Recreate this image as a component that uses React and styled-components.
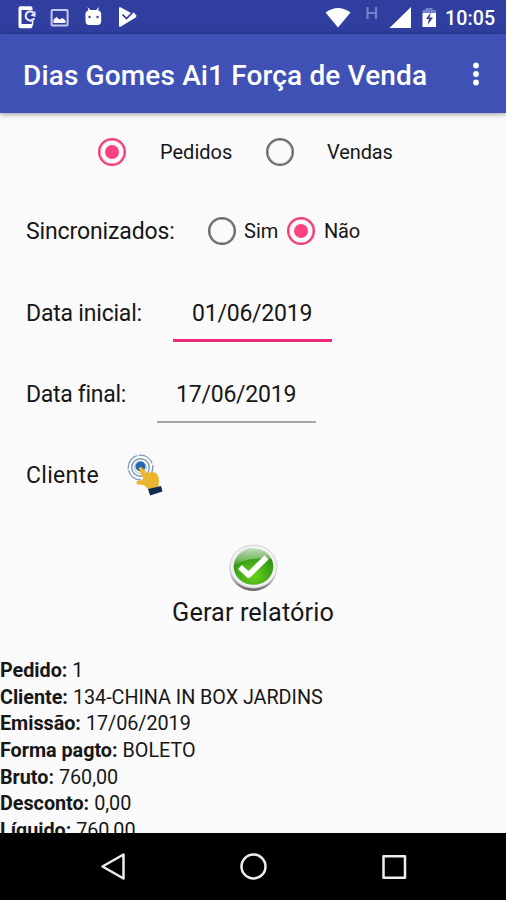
import React from "react";
import styled, { createGlobalStyle } from "styled-components";

const GlobalStyle = createGlobalStyle`
  * { box-sizing: border-box; }
  body { margin: 0; background: #fafafa; font-family: Roboto, sans-serif; overflow: hidden; }
`;

const Screen = styled.div`
  width: 506px;
  height: 900px;
  display: flex;
  flex-direction: column;
  background: #fafafa;
  color: #171717;
`;
const StatusBar = styled.header`
  height: 34px;
  flex: none;
  display: flex;
  background: #303f9f;
  color: #fff;
  svg { display: block; flex: none; }
`;
const Clock = styled.span`
  margin-left: 3px;
  font-size: 19.6px;
  font-weight: 500;
  line-height: 37px;
  letter-spacing: 0.1px;
  white-space: nowrap;
`;
const AppBar = styled.div`
  height: 79px;
  flex: none;
  display: flex;
  align-items: center;
  justify-content: space-between;
  padding: 0 24px 0 23px;
  background: #3f51b5;
  box-shadow: 0 1px 5px rgba(0, 0, 0, 0.4);
  z-index: 1;
`;
const Title = styled.h1`
  margin: 4px 0 0;
  font-size: 28px;
  font-weight: 500;
  letter-spacing: 0.14px;
  white-space: nowrap;
  color: #fff;
`;
const Content = styled.main`
  flex: 1;
  min-height: 0;
  overflow: hidden;
  display: flex;
  flex-direction: column;
`;
const Row = styled.div`
  height: ${(p) => p.$height}px;
  flex: none;
  display: flex;
  align-items: center;
  padding-left: ${(p) => p.$inset || 26}px;
`;
const Label = styled.span`
  width: ${(p) => p.$width}px;
  flex: none;
  padding-top: 2px;
  font-size: 23px;
  letter-spacing: ${(p) => p.$spacing || 0}px;
  line-height: 32px;
  white-space: nowrap;
`;
const Option = styled.label`
  width: ${(p) => p.$width}px;
  flex: none;
  display: flex;
  align-items: center;
  gap: ${(p) => p.$gap}px;
  font-size: 20px;
  letter-spacing: ${(p) => p.$spacing || 0}px;
  line-height: 28px;
  white-space: nowrap;
`;
const RadioRing = styled.span`
  width: 28px;
  height: 28px;
  flex: none;
  display: grid;
  place-items: center;
  border: 2px solid ${(p) => (p.$checked ? "#f33c7c" : "#6d6d6d")};
  box-shadow: inset 0 0 0 0.5px ${(p) => (p.$checked ? "#f33c7c" : "#6d6d6d")};
  border-radius: 50%;
  &::after {
    content: "";
    width: 14px;
    height: 14px;
    border-radius: 50%;
    background: ${(p) => (p.$checked ? "#ff4081" : "transparent")};
  }
`;
const DateField = styled.div`
  width: 159px;
  height: 58px;
  padding: 1px 0 0 19px;
  border-bottom: ${(p) => (p.$focused ? "3px solid #ec2a7b" : "2px solid #a5a5a5")};
  font-size: 23px;
  letter-spacing: -0.22px;
  line-height: 58px;
  white-space: nowrap;
`;
const GenerateButton = styled.button`
  height: 115px;
  flex: none;
  display: flex;
  flex-direction: column;
  align-items: center;
  padding: 0;
  border: 0;
  background: none;
  color: inherit;
  font: 25.3px/39px Roboto, sans-serif;
  letter-spacing: 0.08px;
`;
const Report = styled.dl`
  margin: 0;
  font-size: 19.8px;
  line-height: 26.7px;
  white-space: nowrap;
`;
const Entry = styled.div`
  display: flex;
  gap: 5px;
  height: 26.7px;
`;
const Term = styled.dt`
  font-weight: 700;
  letter-spacing: -0.03px;
`;
const Value = styled.dd`
  margin: 0;
  letter-spacing: -0.04px;
`;
const NavBar = styled.nav`
  height: 67px;
  flex: none;
  background: #000;
  svg { display: block; }
`;

function Notifications() {
  return (
    <svg width="325" height="34" viewBox="0 0 325 34">
      <path d="M20.500 6.200h10q2 0 2 2v18q0 2-2 2h-10q-2 0-2-2v-18q0-2 2-2z" fill="#fff" />
      <path d="M21.500 10h11.500v14H21.500z" fill="#303f9f" />
      <path d="M32.500 21v4" stroke="#fff" strokeWidth="1.500" />
      <path d="M33.500 12.600a4.600 4.600 0 1 0 .8 5.600" fill="none" stroke="#e3e6fa" strokeWidth="2.200" />
      <path d="m30.500 15.500 5-4.500v6z" fill="#e3e6fa" />
      <rect x="51.600" y="10" width="16" height="15.500" rx="1" fill="none" stroke="#c4c9ec" strokeWidth="2" />
      <path d="M53.500 23v-3.500l3-2.500 3 2.500 3-1.500 3 2.500V23z" fill="#fff" />
      <path d="M85.500 14q0-3 3-3.500l-1-3.500 3 3h5.500l3-3-.8 3.500q3 .5 3 3.500v7q0 4-4 4h-7.700q-4 0-4-4z" fill="#fff" />
      <circle cx="89.500" cy="17" r="1.200" fill="#303f9f" /><circle cx="97.500" cy="17" r="1.200" fill="#303f9f" />
      <path d="M119 7.500q1-.5 2 0L131 13l2.500-.8 3 3.300-.5 1.700-15 9.300q-2 1-2-1z" fill="#fff" />
      <path d="m122.500 14.500 4 4 6.500-6.500" fill="none" stroke="#303f9f" strokeWidth="1.700" />
    </svg>
  );
}

function SystemIcons() {
  return (
    <svg width="117" height="34" viewBox="325 0 117 34">
      <path d="M325.500 12.500q12.500-9 25 0L338 27.500z" fill="#fff" />
      <path d="M367.500 7v12M376 7v12M367.500 13h8.500" stroke="#7480c8" strokeWidth="2.200" />
      <path d="M411 7v21h-21.500z" fill="#fff" />
      <path d="M422.500 13V10h3V8h7v2h3.500v3z" fill="#7480c8" />
      <path d="M422.500 13H436v14h-13.500z" fill="#fff" />
      <path d="m431 12-5 7h3l-1.500 6 5.500-7.500h-3.500z" fill="#303f9f" />
    </svg>
  );
}

function MoreIcon() {
  return (
    <svg width="12" height="30" viewBox="0 0 12 30">
      <g fill="#fff"><circle cx="6" cy="6.500" r="2.900" /><circle cx="6" cy="15" r="2.900" /><circle cx="6" cy="23.500" r="2.900" /></g>
    </svg>
  );
}

function TouchIcon() {
  return (
    <svg width="40" height="44" viewBox="125 453 40 44">
      <g fill="none" stroke="#7c9ab3">
        <circle cx="140.500" cy="467.500" r="12.300" strokeWidth="1.300" strokeDasharray="17 1.500" />
        <circle cx="140.500" cy="467.500" r="8.800" strokeWidth="1.400" />
        <circle cx="140.500" cy="467.500" r="6" stroke="#a9c2d8" strokeWidth="1" />
      </g>
      <circle cx="140.500" cy="466.500" r="5" fill="#2866ad" />
      <path d="M138.500 468.500q2-3 4.500 0l4 5q6-3 9.500 0 2.500 3 2.500 7l-.5 6-10 3-4.500-4.500-6.500-.5q-2.500-2.500.5-4l6-.5z" fill="#ecb52f" />
      <path d="m148 489 13-3 1.500 5.500-12.500 4z" fill="#102b4b" />
    </svg>
  );
}

function CheckBadge() {
  return (
    <svg width="50" height="50" viewBox="228 543 50 50">
      <defs>
        <linearGradient id="rim" x1="0" y1="0" x2="0" y2="1">
          <stop offset="0" stopColor="#eee" /><stop offset=".65" stopColor="#c5c5c5" /><stop offset="1" stopColor="#626262" />
        </linearGradient>
        <radialGradient id="green" cx=".5" cy=".75" r=".75">
          <stop offset="0" stopColor="#68d21b" /><stop offset=".55" stopColor="#3fa719" /><stop offset="1" stopColor="#277f17" />
        </radialGradient>
        <linearGradient id="gloss" x1="0" y1="0" x2="0" y2="1">
          <stop offset="0" stopColor="#fff" stopOpacity=".75" /><stop offset="1" stopColor="#fff" stopOpacity=".12" />
        </linearGradient>
      </defs>
      <ellipse cx="253" cy="569" rx="23.500" ry="22" fill="url(#rim)" />
      <ellipse cx="253.500" cy="566.500" rx="23.500" ry="21.500" fill="#f0f0f0" stroke="#c9c9c9" strokeWidth=".8" />
      <ellipse cx="253.500" cy="566.500" rx="19.800" ry="18.300" fill="url(#green)" />
      <path d="M234 565q-.5-14 17-17 16-2 21 11-22-3-38 6z" fill="url(#gloss)" />
      <path d="m240 567 8.500 8L266.500 557.500" fill="none" stroke="#fff" strokeWidth="5.800" strokeLinejoin="round" />
    </svg>
  );
}

function NavIcons() {
  return (
    <svg width="506" height="67" viewBox="0 833 506 67" fill="none" stroke="#eee" strokeWidth="2.500" strokeLinejoin="round">
      <path d="M102.500 866.500 123.500 854.500v24z" />
      <circle cx="253.500" cy="866.500" r="12" />
      <rect x="383.500" y="856.300" width="21.500" height="21.500" />
    </svg>
  );
}

function Radio({ label, checked, ...rest }) {
  return (
    <Option {...rest}>
      <RadioRing $checked={checked} />
      {label}
    </Option>
  );
}

const order = [
  ["Pedido:", "1"],
  ["Cliente:", "134-CHINA IN BOX JARDINS"],
  ["Emissão:", "17/06/2019"],
  ["Forma pagto:", "BOLETO"],
  ["Bruto:", "760,00"],
  ["Desconto:", "0,00"],
  ["Líquido:", "760,00"],
];

export default function App() {
  return (
    <>
      <GlobalStyle />
      <Screen>
        <StatusBar>
          <Notifications />
          <SystemIcons />
          <Clock>10:05</Clock>
        </StatusBar>
        <AppBar>
          <Title>Dias Gomes Ai1 Força de Venda</Title>
          <MoreIcon />
        </AppBar>
        <Content>
          <Row $height={78} $inset={98}>
            <Radio label="Pedidos" checked $width={168} $gap={34} />
            <Radio label="Vendas" $gap={33} $spacing={-0.1} />
          </Row>
          <Row $height={80}>
            <Label $width={182} $spacing={-0.12}>Sincronizados:</Label>
            <Radio label="Sim" $width={79} $gap={8} />
            <Radio label="Não" checked $gap={9} $spacing={-0.2} />
          </Row>
          <Row $height={83}>
            <Label $width={147} $spacing={-0.2}>Data inicial:</Label>
            <DateField $focused>01/06/2019</DateField>
          </Row>
          <Row $height={79}>
            <Label $width={131} $spacing={-0.3}>Data final:</Label>
            <DateField>17/06/2019</DateField>
          </Row>
          <Row $height={84}>
            <Label $width={99} $spacing={0.3}>Cliente</Label>
            <TouchIcon />
          </Row>
          <Row $height={26} />
          <GenerateButton>
            <CheckBadge />
            Gerar relatório
          </GenerateButton>
          <Report>
            {order.map(([term, value]) => (
              <Entry key={term}>
                <Term>{term}</Term>
                <Value>{value}</Value>
              </Entry>
            ))}
          </Report>
        </Content>
        <NavBar>
          <NavIcons />
        </NavBar>
      </Screen>
    </>
  );
}
